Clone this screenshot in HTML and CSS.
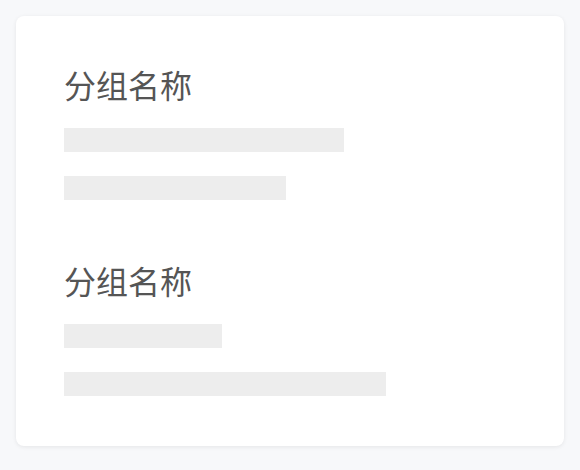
FILE: index.html
```html
<!DOCTYPE html>
<html lang="zh">
<head>
<meta charset="utf-8">
<link rel="stylesheet" href="styles.css">
</head>
<body>
<div class="card">
  <div class="group">
    <div class="title">分组名称</div>
    <div class="bars">
      <div class="bar" style="width:280px"></div>
      <div class="bar" style="width:222px"></div>
    </div>
  </div>
  <div class="group">
    <div class="title">分组名称</div>
    <div class="bars">
      <div class="bar" style="width:158px"></div>
      <div class="bar" style="width:322px"></div>
    </div>
  </div>
</div>
</body>
</html>
```
FILE: styles.css
```css
html, body {
  margin: 0;
  padding: 0;
  background: #f7f8fa;
}
body {
  padding: 16px;
  font-family: "Noto Sans CJK SC", "Noto Sans", sans-serif;
}
.card {
  background: #ffffff;
  border-radius: 8px;
  box-shadow: 0 1px 4px rgba(0, 0, 0, 0.08);
  padding: 48px 48px 50px;
  display: flex;
  flex-direction: column;
  gap: 60px;
}
.group {
  display: flex;
  flex-direction: column;
  gap: 24px;
}
.title {
  font-size: 32px;
  line-height: 40px;
  color: #555555;
}
.bars {
  display: flex;
  flex-direction: column;
  gap: 24px;
}
.bar {
  height: 24px;
  background: #ededed;
}
```
